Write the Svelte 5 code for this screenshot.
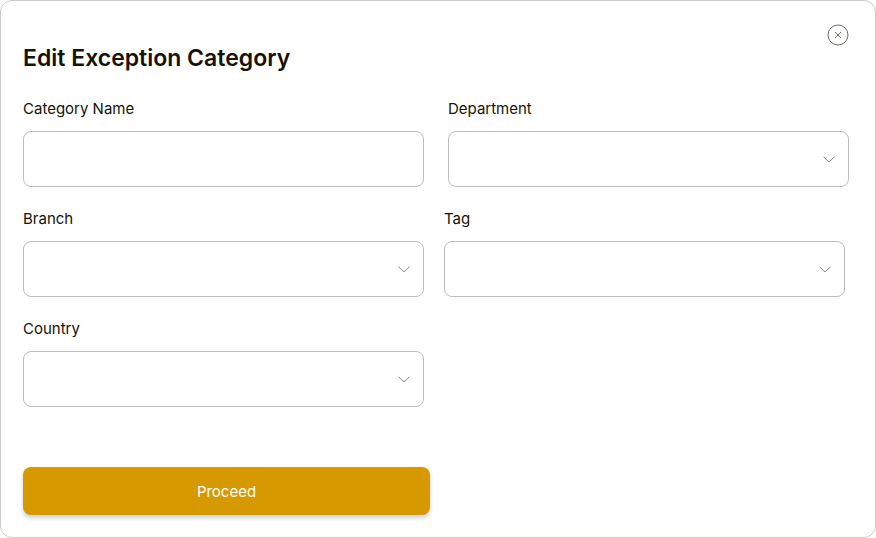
<script>
  const rows = [
    {
      name: 'wide',
      fields: [
        { id: 'category-name', label: 'Category Name', type: 'text' },
        { id: 'department', label: 'Department', type: 'select' }
      ]
    },
    {
      name: 'narrow',
      fields: [
        { id: 'branch', label: 'Branch', type: 'select' },
        { id: 'tag', label: 'Tag', type: 'select' }
      ]
    },
    {
      name: 'wide',
      fields: [{ id: 'country', label: 'Country', type: 'select' }]
    }
  ];
</script>

<main class="dialog">
  <header>
    <h1>Edit Exception Category</h1>
    <button class="close" type="button" aria-label="Close">
      <svg viewBox="0 0 22 22" width="22" height="22" fill="none" stroke="#6f6c62">
        <circle cx="11" cy="11" r="10" />
        <path d="M8 8l6 6M14 8l-6 6" />
      </svg>
    </button>
  </header>

  <form onsubmit={(event) => event.preventDefault()}>
    {#each rows as row}
      <div class="row {row.name}">
        {#each row.fields as field}
          <div class="field">
            <label for={field.id}>{field.label}</label>
            {#if field.type === 'text'}
              <input id={field.id} type="text" />
            {:else}
              <div class="picker">
                <select id={field.id}><option value=""></option></select>
                <svg viewBox="0 0 12 7" width="12" height="7" fill="none" stroke="#77756d" aria-hidden="true">
                  <path d="M.5.7l4.3 4.3q1.2 1.1 2.4 0L11.5.7" stroke-width=".9" />
                </svg>
              </div>
            {/if}
          </div>
        {/each}
      </div>
    {/each}
    <button class="proceed" type="submit">Proceed</button>
  </form>
</main>

<style>
  :global(body) {
    background: #fff;
  }

  .dialog {
    box-sizing: border-box;
    min-height: 100vh;
    padding: 23px 26px 22px 22px;
    border: 1px solid #cbcbc8;
    border-radius: 12px;
    background: #fff;
    color: #171203;
    font-family: Inter, 'Liberation Sans', sans-serif;
  }

  header {
    display: flex;
    align-items: flex-start;
    justify-content: space-between;
  }

  h1 {
    margin: 18px 0 24px;
    font-size: 23px;
    line-height: 32px;
    font-weight: 600;
  }

  .close {
    width: 22px;
    height: 22px;
    padding: 0;
    border: 0;
    background: none;
    cursor: pointer;
  }

  .close svg {
    display: block;
  }

  form {
    display: flex;
    flex-direction: column;
    gap: 21px;
  }

  .row {
    display: grid;
    grid-template-columns: 1fr 1fr;
    gap: 24px;
  }

  .narrow {
    gap: 20px;
    padding-right: 4px;
  }

  .field {
    display: flex;
    flex-direction: column;
    gap: 11px;
  }

  label {
    font-size: 15px;
    line-height: 22px;
  }

  .picker {
    position: relative;
  }

  input,
  select {
    display: block;
    box-sizing: border-box;
    width: 100%;
    height: 56px;
    padding: 0 16px;
    border: 1px solid #bcbcbb;
    border-radius: 8px;
    background: #fff;
    color: inherit;
    font: inherit;
    appearance: none;
  }

  .picker svg {
    position: absolute;
    top: 25px;
    right: 14px;
    pointer-events: none;
  }

  .proceed {
    width: calc(50% - 6px);
    height: 48px;
    margin-top: 39px;
    border: 0;
    border-radius: 8px;
    background: #d79900;
    box-shadow: 0 3px 4px rgba(20, 20, 40, 0.2);
    color: #fff;
    font: inherit;
    font-size: 15px;
    cursor: pointer;
  }
</style>
